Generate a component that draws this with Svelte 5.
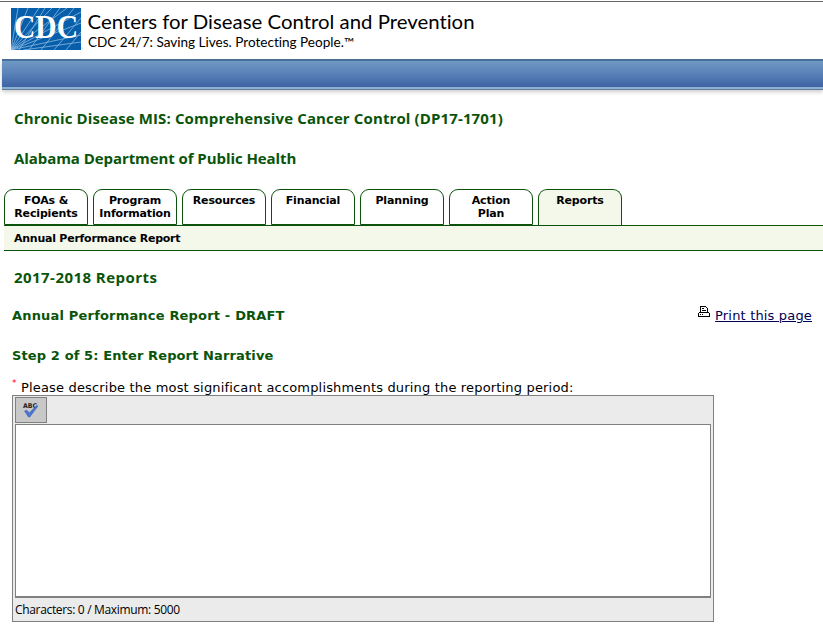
<script lang="ts">
  interface Tab {
    label: string[];
    active?: boolean;
  }

  const tabs: Tab[] = [
    { label: ['FOAs &', 'Recipients'] },
    { label: ['Program', 'Information'] },
    { label: ['Resources'] },
    { label: ['Financial'] },
    { label: ['Planning'] },
    { label: ['Action', 'Plan'] },
    { label: ['Reports'], active: true }
  ];

  const maxLength = 5000;

  let narrative = $state('');
</script>

<header class="masthead">
  <svg class="logo" width="72" height="42" viewBox="0 0 72 42" aria-label="CDC">
    <defs>
      <clipPath id="logo-box"><rect width="70" height="42" /></clipPath>
    </defs>
    <rect width="70" height="42" fill="#075fab" />
    <g clip-path="url(#logo-box)" stroke="#8bb9df" stroke-width="0.8">
      <path d="M0 42L7 0M0 42L17 0M0 42L28 0M0 42L41 0M0 42L56 0M0 42L70 4M0 42L70 15M0 42L70 27M12 42L70 34M8 42L34 0M18 42L49 0M30 42L63 0M43 42L70 10M55 42L70 24" />
    </g>
    <text x="3" y="30" textLength="64" lengthAdjust="spacingAndGlyphs">CDC</text>
    <circle cx="71" cy="40" r="0.6" fill="#6aa0cf" />
  </svg>
  <svg class="wordmark" width="400" height="46" viewBox="0 0 400 46">
    <text class="agency" x="-0.5" y="21" textLength="387" lengthAdjust="spacingAndGlyphs">Centers for Disease Control and Prevention</text>
    <text class="tagline" x="0" y="39" textLength="266" lengthAdjust="spacingAndGlyphs">CDC 24/7: Saving Lives. Protecting People.™</text>
  </svg>
</header>
<div class="bar"></div>

<h1>Chronic Disease MIS: Comprehensive Cancer Control (DP17-1701)</h1>
<h1 class="grantee">Alabama Department of Public Health</h1>

<nav class="tabs">
  {#each tabs as tab}
    <div class="tab" class:active={tab.active}>
      {#each tab.label as line}
        <span>{line}</span>
      {/each}
    </div>
  {/each}
</nav>
<div class="subnav">Annual Performance Report</div>

<main>
  <h2 class="year">2017-2018 Reports</h2>
  <div class="title-row">
    <h3>Annual Performance Report - DRAFT</h3>
    <div class="print">
      <svg width="12" height="12" viewBox="0 0 12 12" shape-rendering="crispEdges">
        <path d="M2.500 6.500V0.500H7.500L9.500 2.500V6.500M4 2.500H6M4 4.500H8M1.500 6.500H10.500L11.500 7.500V10.500H0.500V7.500ZM2 8.500H3M4 8.500H5" fill="none" stroke="#000" />
      </svg>
      <a href="#print">Print this page</a>
    </div>
  </div>
  <h3 class="step">Step 2 of 5: Enter Report Narrative</h3>
  <label for="narrative"><span class="required">*</span>Please describe the most significant accomplishments during the reporting period:</label>

  <div class="editor">
    <button type="button" aria-label="Check spelling">
      <svg width="18" height="18" viewBox="0 0 18 18">
        <text x="1" y="7" textLength="14" lengthAdjust="spacingAndGlyphs">ABC</text>
        <path d="M2.500 10L5 9.300L7.300 12L14.500 4.500L16 5L7.800 16H6.500Z" fill="#4b74cf" stroke="#315bb0" stroke-width="0.500" />
      </svg>
    </button>
    <textarea id="narrative" maxlength={maxLength} bind:value={narrative}></textarea>
    <div class="count">Characters: {narrative.length} / Maximum: {maxLength}</div>
  </div>
</main>

<style>
  :global(body) {
    background: #fff;
    color: #000;
    font-family: Verdana, "DejaVu Sans", sans-serif;
    overflow: hidden;
  }

  h1,
  h2,
  h3 {
    margin: 0;
    color: #0a540a;
    white-space: nowrap;
  }

  .masthead {
    display: flex;
    align-items: flex-start;
    box-sizing: border-box;
    height: 58px;
    padding: 6px 0 0 11px;
    border-top: 1px solid #666;
    margin-top: 1px;
  }

  .logo {
    flex: none;
    overflow: visible;
  }

  .logo text {
    font: bold 33px "Liberation Serif", serif;
    fill: #fff;
  }

  .wordmark {
    margin-left: 5px;
    overflow: visible;
  }

  .agency {
    font: 20px Lato, sans-serif;
    font-variant-ligatures: none;
  }

  .tagline {
    font: 12.5px Lato, sans-serif;
    font-variant-ligatures: none;
  }

  .bar {
    height: 26px;
    margin-left: 2px;
    border-top: 2px solid #496f97;
    border-bottom: 2px solid #8bb1d2;
    background: linear-gradient(#7098c4, #5b84ba 45%, #3e62a5);
    box-shadow: 0 1px 0 #617d9b, 0 3px 4px #ccc;
  }

  h1 {
    padding-left: 14px;
    margin-top: 19px;
    font: bold 15px/20px "Trebuchet MS", "Open Sans", sans-serif;
    letter-spacing: 0.12px;
  }

  .grantee {
    margin-top: 20px;
    letter-spacing: -0.07px;
  }

  .tabs {
    display: flex;
    gap: 5px;
    padding-left: 4px;
    margin-top: 21px;
  }

  .tab {
    display: flex;
    flex-direction: column;
    align-items: center;
    box-sizing: border-box;
    width: 84px;
    height: 36px;
    padding-top: 4px;
    border: 1px solid #0b520b;
    border-radius: 9px 9px 0 0;
    font: bold 11px/13px Verdana, "DejaVu Sans", sans-serif;
    letter-spacing: -0.15px;
    white-space: nowrap;
  }

  .tab.active {
    border-bottom: 0;
    background: #f4f8ea;
  }

  .subnav {
    height: 24px;
    padding-left: 10px;
    margin-left: 4px;
    border: solid #0b520b;
    border-width: 1px 0;
    background: #f4f8ea;
    font: bold 11px/25px Verdana, "DejaVu Sans", sans-serif;
    letter-spacing: -0.24px;
  }

  main {
    padding: 16px 11px 0 12px;
  }

  .year {
    padding-left: 2px;
    font: bold 15px/20px "Trebuchet MS", "Open Sans", sans-serif;
    letter-spacing: 0.45px;
  }

  .title-row {
    display: flex;
    justify-content: space-between;
    margin-top: 19px;
  }

  h3 {
    font: bold 13px/20px Verdana, "DejaVu Sans", sans-serif;
    letter-spacing: 0.18px;
  }

  .print {
    display: flex;
    gap: 5px;
    font-size: 13px;
    letter-spacing: 0.17px;
    line-height: 20px;
    white-space: nowrap;
  }

  a {
    color: #000055;
  }

  .step {
    margin-top: 20px;
    letter-spacing: 0.12px;
  }

  label {
    display: flex;
    height: 20px;
    margin-top: 12px;
    font-size: 13px;
    letter-spacing: 0.17px;
    line-height: 20px;
    white-space: nowrap;
  }

  .required {
    width: 9px;
    color: #f00;
    font-size: 9px;
    line-height: 11px;
  }

  .editor {
    box-sizing: border-box;
    width: 702px;
    height: 227px;
    padding: 1px 2px;
    border: 1px solid #808080;
    margin-top: -3px;
    background: #ebebeb;
  }

  button {
    display: flex;
    justify-content: center;
    align-items: center;
    width: 32px;
    height: 26px;
    padding: 0;
    border: 1px solid #808080;
    background: #c8c8c8;
  }

  button text {
    font: bold 6.5px "DejaVu Sans", sans-serif;
    fill: #222;
  }

  textarea {
    display: block;
    box-sizing: border-box;
    width: 696px;
    height: 174px;
    border: 1px solid #808080;
    border-bottom-width: 2px;
    border-radius: 0;
    margin: 1px 0 0;
    outline: none;
    resize: none;
  }

  .count {
    font: 12px/23px "Segoe UI", "Open Sans", sans-serif;
    letter-spacing: -0.33px;
  }
</style>
